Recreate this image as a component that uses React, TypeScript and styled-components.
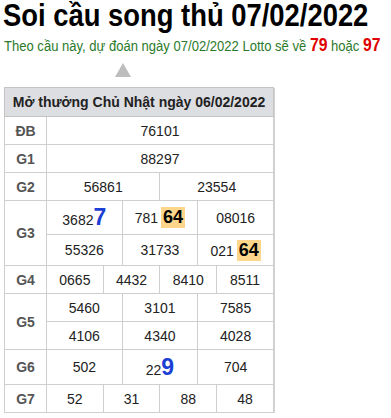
import React from 'react';
import styled, { createGlobalStyle } from 'styled-components';

const GlobalStyle = createGlobalStyle`
  body {
    margin: 0;
    background: #fff;
    font-family: "Liberation Sans", Arial, sans-serif;
  }
`;

const Page = styled.div`
  padding: 0 4px;
  width: 383px;
`;

const Title = styled.h1`
  margin: 0 0 0 -1px;
  font-size: 27.4px;
  line-height: 30px;
  font-weight: bold;
  color: #000;
  white-space: nowrap;
  transform: scaleY(1.17);
  transform-origin: center 15px;
`;

const Predict = styled.p`
  margin: 6px 0 0;
  font-size: 13.05px;
  line-height: 20px;
  color: #2b7a2b;
  white-space: nowrap;
  transform: scaleY(1.11);
`;

const Hot = styled.b`
  font-size: 15.75px;
  color: #e00000;
`;

const Arrow = styled.div`
  margin: 6px 0 10px 111px;
  width: 0;
  height: 0;
  border-left: 8px solid transparent;
  border-right: 8px solid transparent;
  border-bottom: 14px solid #bdbdbd;
`;

const Table = styled.table`
  width: 270px;
  border-collapse: collapse;
  table-layout: fixed;
  border: 1px solid #c4c4c4;
  box-shadow: 1px 1px 0 #d4d4d4;
`;

const Row = styled.tr<{ $h: number }>`
  height: ${p => p.$h}px;
`;

const HeadCell = styled.th`
  background: #dddee2;
  border: 1px solid #c4c4c4;
  font-size: 14px;
  font-weight: bold;
  color: #222;
  text-align: center;
  padding: 0;
  white-space: nowrap;
`;

const Label = styled.td`
  border: 1px solid #cfcfcf;
  font-size: 14px;
  font-weight: bold;
  color: #555;
  text-align: center;
  padding: 0;
`;

const Cell = styled.td`
  border: 1px solid #cfcfcf;
  font-size: 14px;
  color: #222;
  text-align: center;
  padding: 0;
  white-space: nowrap;
`;

const Big = styled.b`
  font-size: 23px;
  line-height: 20px;
  color: #1c40d4;
`;

const Mark = styled.b`
  display: inline-block;
  margin-left: 3px;
  padding: 0 2px;
  font-size: 18px;
  line-height: 21px;
  color: #000;
  background: #fdd68b;
`;

type Num = { n: string; tail?: string; kind?: 'big' | 'mark' };

const Value = ({ v }: { v: Num }) => (
  <>
    {v.n}
    {v.tail && v.kind === 'big' && <Big>{v.tail}</Big>}
    {v.tail && v.kind === 'mark' && <Mark>{v.tail}</Mark>}
  </>
);

const cells = (list: Num[], span: number) =>
  list.map((v, i) => (
    <Cell key={i} colSpan={span}>
      <Value v={v} />
    </Cell>
  ));

const n = (s: string): Num => ({ n: s });

const App = () => {
  return (
    <Page>
      <GlobalStyle />
      <Title>Soi cầu song thủ 07/02/2022</Title>
      <Predict>
        Theo cầu này, dự đoán ngày 07/02/2022 Lotto sẽ về <Hot>79</Hot> hoặc <Hot>97</Hot>
      </Predict>
      <Arrow />
      <Table>
        <colgroup>
          <col style={{ width: 42 }} />
          {Array.from({ length: 12 }).map((_, i) => (
            <col key={i} />
          ))}
        </colgroup>
        <thead>
          <Row $h={29}>
            <HeadCell colSpan={13}>Mở thưởng Chủ Nhật ngày 06/02/2022</HeadCell>
          </Row>
        </thead>
        <tbody>
          <Row $h={28}>
            <Label>ĐB</Label>
            {cells([n('76101')], 12)}
          </Row>
          <Row $h={28}>
            <Label>G1</Label>
            {cells([n('88297')], 12)}
          </Row>
          <Row $h={28}>
            <Label>G2</Label>
            {cells([n('56861'), n('23554')], 6)}
          </Row>
          <Row $h={34}>
            <Label rowSpan={2}>G3</Label>
            {cells(
              [
                { n: '3682', tail: '7', kind: 'big' },
                { n: '781', tail: '64', kind: 'mark' },
                n('08016'),
              ],
              4
            )}
          </Row>
          <Row $h={31}>
            {cells([n('55326'), n('31733'), { n: '021', tail: '64', kind: 'mark' }], 4)}
          </Row>
          <Row $h={28}>
            <Label>G4</Label>
            {cells([n('0665'), n('4432'), n('8410'), n('8511')], 3)}
          </Row>
          <Row $h={28}>
            <Label rowSpan={2}>G5</Label>
            {cells([n('5460'), n('3101'), n('7585')], 4)}
          </Row>
          <Row $h={28}>{cells([n('4106'), n('4340'), n('4028')], 4)}</Row>
          <Row $h={35}>
            <Label>G6</Label>
            {cells([n('502'), { n: '22', tail: '9', kind: 'big' }, n('704')], 4)}
          </Row>
          <Row $h={28}>
            <Label>G7</Label>
            {cells([n('52'), n('31'), n('88'), n('48')], 3)}
          </Row>
        </tbody>
      </Table>
    </Page>
  );
};

export default App;
